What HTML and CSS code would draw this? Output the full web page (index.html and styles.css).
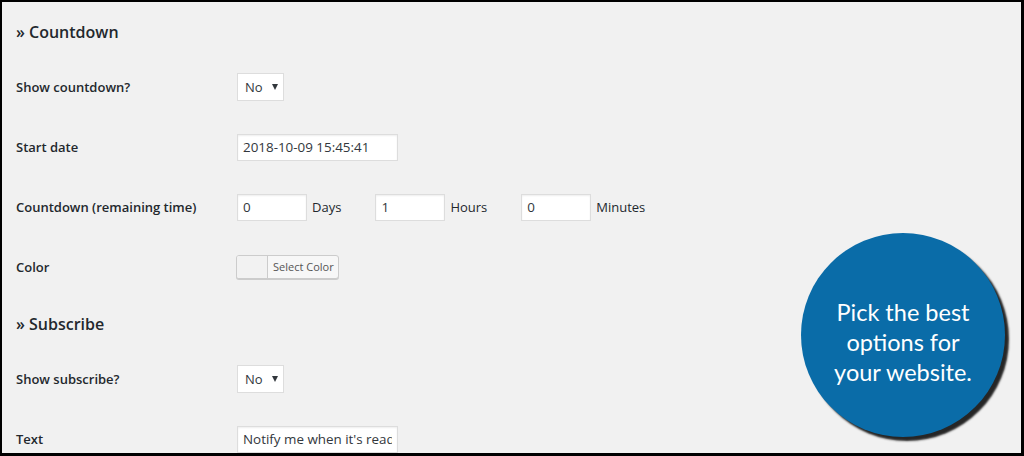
FILE: index.html
```html
<!DOCTYPE html>
<html lang="en">
<head>
    <meta charset="UTF-8">
    <meta name="viewport" content="width=device-width, initial-scale=1.0">
    <title>Coming Soon Settings</title>
    <link rel="stylesheet" href="styles.css">
</head>
<body>

<div class="screen">
    <div class="settings">
        <h2 class="section-title">&raquo; Countdown</h2>
        <div class="form-table">
            <div class="row">
                <div class="label">Show countdown?</div>
                <div class="field">
                    <div class="select">No <span class="caret"></span></div>
                </div>
            </div>
            <div class="row">
                <div class="label">Start date</div>
                <div class="field">
                    <input type="text" class="text-input" value="2018-10-09 15:45:41">
                </div>
            </div>
            <div class="row">
                <div class="label">Countdown (remaining time)</div>
                <div class="field">
                    <input type="text" class="num-input" value="0"><span class="unit">Days</span>
                    <input type="text" class="num-input" value="1"><span class="unit">Hours</span>
                    <input type="text" class="num-input" value="0"><span class="unit">Minutes</span>
                </div>
            </div>
            <div class="row">
                <div class="label">Color</div>
                <div class="field">
                    <div class="color-btn">
                        <span class="swatch"></span>
                        <span class="color-text">Select Color</span>
                    </div>
                </div>
            </div>
        </div>

        <h2 class="section-title">&raquo; Subscribe</h2>
        <div class="form-table">
            <div class="row">
                <div class="label">Show subscribe?</div>
                <div class="field">
                    <div class="select">No <span class="caret"></span></div>
                </div>
            </div>
            <div class="row">
                <div class="label">Text</div>
                <div class="field">
                    <input type="text" class="text-input" value="Notify me when it's ready">
                </div>
            </div>
        </div>
    </div>

    <div class="bubble">
        <p>Pick the best<br>options for<br>your website.</p>
    </div>
</div>

</body>
</html>
```

FILE: styles.css
```css
html, body {
    margin: 0;
    padding: 0;
}
body {
    background-color: #000000;
    font-family: "Open Sans", "Noto Sans", sans-serif;
    color: #23282d;
    overflow: hidden;
}
.screen {
    position: relative;
    box-sizing: border-box;
    width: 1024px;
    height: 456px;
    border-style: solid;
    border-color: #000000;
    border-width: 2px 3px 3px 2px;
    background: #f1f1f1;
    overflow: hidden;
}
.settings {
    padding: 3px 0 0 14px;
}
.section-title {
    margin: 15px 0 13px;
    font-size: 16px;
    line-height: 24px;
    font-weight: 600;
    color: #23282d;
}
.row {
    display: flex;
    align-items: center;
    height: 60px;
}
.label {
    width: 221px;
    font-size: 13px;
    font-weight: 600;
}
.field {
    display: flex;
    align-items: center;
    font-size: 13px;
}
.select {
    box-sizing: border-box;
    display: flex;
    align-items: center;
    width: 47px;
    height: 28px;
    padding-left: 7px;
    background: #ffffff;
    border: 1px solid #dddddd;
    font-size: 13px;
    color: #32373c;
}
.caret {
    width: 0;
    height: 0;
    margin-left: 9px;
    border-left: 3.5px solid transparent;
    border-right: 3.5px solid transparent;
    border-top: 6px solid #32373c;
}
input {
    box-sizing: border-box;
    height: 27px;
    padding: 0 5px;
    border: 1px solid #dddddd;
    background: #ffffff;
    box-shadow: inset 0 1px 2px rgba(0,0,0,0.07);
    font-family: "Open Sans", "Noto Sans", sans-serif;
    font-size: 13.4px;
    color: #32373c;
    outline: none;
}
.text-input {
    width: 161px;
}
.num-input {
    width: 70px;
}
.unit {
    margin: 0 34px 0 5px;
}
.color-btn {
    box-sizing: border-box;
    display: flex;
    height: 24px;
    margin-left: -1px;
    border: 1px solid #cccccc;
    border-radius: 3px;
    background: #f7f7f7;
    box-shadow: 0 1px 0 #cccccc;
    overflow: hidden;
}
.swatch {
    width: 30px;
    border-right: 1px solid #cccccc;
    background: #f2f2f2;
}
.color-text {
    padding: 0 4px 0 5px;
    font-size: 11px;
    line-height: 22px;
    color: #555555;
}
.bubble {
    position: absolute;
    left: 799px;
    top: 231px;
    width: 204px;
    height: 204px;
    border-radius: 50%;
    background: #0a6ca8;
    box-shadow: 4px 4px 2px rgba(15,15,15,0.9);
    display: flex;
    align-items: center;
    justify-content: center;
}
.bubble p {
    margin: 0;
    padding-top: 13px;
    font-family: Lato, "Open Sans", sans-serif;
    font-size: 23.5px;
    line-height: 30px;
    text-align: center;
    color: #ffffff;
}
```
